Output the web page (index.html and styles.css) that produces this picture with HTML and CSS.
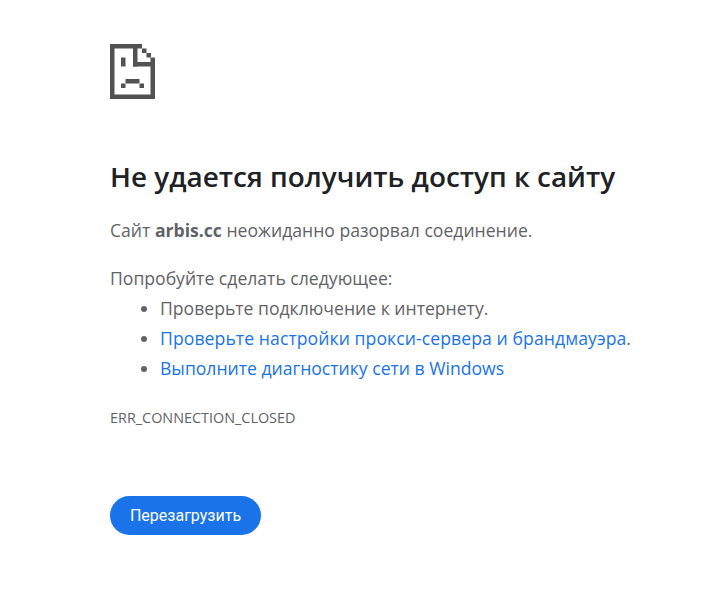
FILE: index.html
```html
<!DOCTYPE html>
<html lang="ru">
<head>
<meta charset="utf-8">
<title>arbis.cc</title>
<link rel="stylesheet" href="styles.css">
</head>
<body>
<main class="page">
  <svg class="icon" width="45" height="55" viewBox="0 0 45 55" aria-hidden="true">
    <g fill="#525252">
      <rect x="0" y="0" width="32" height="4.5"/>
      <rect x="0" y="0" width="4.5" height="55"/>
      <rect x="0" y="50.5" width="45" height="4.5"/>
      <rect x="40.5" y="18" width="4.5" height="37"/>
      <rect x="23" y="0" width="4.5" height="22.5"/>
      <rect x="23" y="18" width="22" height="4.5"/>
      <rect x="32" y="4.5" width="4.5" height="4.5"/>
      <rect x="36.5" y="9" width="4.5" height="4.5"/>
      <rect x="40.5" y="13.5" width="4.5" height="4.5"/>
      <rect x="11" y="13.5" width="4.5" height="9"/>
      <rect x="15.5" y="35" width="14" height="4.5"/>
      <rect x="11" y="39.5" width="4.5" height="4.5"/>
      <rect x="29.5" y="39.5" width="4.5" height="4.5"/>
    </g>
  </svg>
  <h1 class="title">Не удается получить доступ к сайту</h1>
  <p class="summary">Сайт <strong>arbis.cc</strong> неожиданно разорвал соединение.</p>
  <div class="suggestions">
    <p class="lead">Попробуйте сделать следующее:</p>
    <ul class="list">
      <li>Проверьте подключение к интернету.</li>
      <li><a class="wide" href="#">Проверьте настройки прокси-сервера и брандмауэра</a>.</li>
      <li><a href="#">Выполните диагностику сети в Windows</a></li>
    </ul>
  </div>
  <div class="code">ERR_CONNECTION_CLOSED</div>
  <button class="reload" type="button">Перезагрузить</button>
</main>
</body>
</html>
```
FILE: styles.css
```css
html, body { margin: 0; padding: 0; background: #fff; }
.page {
  padding: 44px 0 0 110px;
  font-family: "Open Sans", "Noto Sans", sans-serif;
  font-size: 17.6px;
  color: #5f6368;
  display: flex;
  flex-direction: column;
  align-items: flex-start;
}
.icon { display: block; }
.title {
  margin: 57px 0 0;
  font-size: 27.9px;
  line-height: 40px;
  font-weight: 600;
  color: #202124;
  white-space: nowrap;
}
.summary { margin: 22px 0 0; line-height: 24px; white-space: nowrap; }
.summary strong { font-weight: 700; }
.suggestions { margin-top: 24px; }
.lead { margin: 0; line-height: 24px; }
.list { margin: 3px 0 0; padding: 0 0 0 50px; }
.list li { line-height: 30px; white-space: nowrap; }
.list li::marker { color: #5f6368; }
.list a { color: #1a73e8; text-decoration: none; }
.list .wide { letter-spacing: 0.08px; }
.code { margin-top: 25px; font-size: 14.4px; line-height: 20px; }
.reload {
  margin-top: 68px;
  width: 151px;
  height: 39px;
  border: 0;
  border-radius: 20px;
  background: #1a73e8;
  color: #fff;
  font-family: Roboto, sans-serif;
  font-size: 16px;
  padding: 0;
}
```
